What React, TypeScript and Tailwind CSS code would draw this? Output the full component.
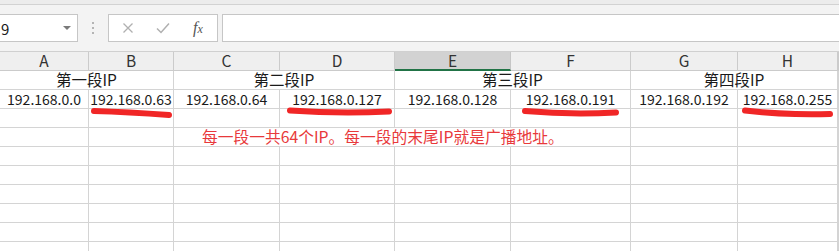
import React from "react";

const cols = ["A", "B", "C", "D", "E", "F", "G", "H", ""];

const ips = [
  "192.168.0.0",
  "192.168.0.63",
  "192.168.0.64",
  "192.168.0.127",
  "192.168.0.128",
  "192.168.0.191",
  "192.168.0.192",
  "192.168.0.255",
  "",
];

const groups = ["第一段IP", "第二段IP", "第三段IP", "第四段IP"];

const cell = "h-[19px] border-r border-b border-[#d4d4d4] flex items-center justify-center whitespace-nowrap";

function EmptyRow() {
  return (
    <>
      {cols.map((_, i) => (
        <div key={i} className={cell} />
      ))}
    </>
  );
}

export default function App() {
  return (
    <div className="relative w-[839px] h-[251px] overflow-hidden bg-white text-[#1a1a1a] font-['Noto_Sans_CJK_SC',sans-serif]">
      {/* top strip */}
      <div className="h-[5px] bg-[#ececec] border-b border-[#d2d2d2]" />

      {/* formula bar */}
      <div className="h-[46px] bg-[#f3f3f3] flex items-start pt-[9px]">
        <div className="-ml-px w-[79px] h-[28px] bg-white border border-[#c6c6c6] flex items-center justify-between pl-[1px] pr-[6px]">
          <span className="text-[15px] leading-none">9</span>
          <span className="w-0 h-0 border-l-[4px] border-r-[4px] border-t-[4px] border-l-transparent border-r-transparent border-t-[#7a7a7a]" />
        </div>
        <div className="w-[30px] h-[28px] flex flex-col items-center justify-center gap-[3px]">
          <span className="w-[2px] h-[2px] bg-[#b4b4b4]" />
          <span className="w-[2px] h-[2px] bg-[#b4b4b4]" />
          <span className="w-[2px] h-[2px] bg-[#b4b4b4]" />
        </div>
        <div className="w-[110px] h-[28px] bg-white border border-[#c6c6c6] flex items-center">
          <svg width="12" height="12" viewBox="0 0 12 12" className="ml-[13px]">
            <path d="M1.5 1.5 L10.5 10.5 M10.5 1.5 L1.5 10.5" stroke="#b0b0b0" strokeWidth="1.3" fill="none" />
          </svg>
          <svg width="14" height="12" viewBox="0 0 14 12" className="ml-[22px]">
            <path d="M1 6.5 L5 10.5 L13 1.5" stroke="#b0b0b0" strokeWidth="1.5" fill="none" />
          </svg>
          <span className="ml-[23px] font-['Liberation_Serif',serif] italic text-[16px] text-[#555] leading-none">
            f<span className="text-[12px]">x</span>
          </span>
        </div>
        <div className="ml-[4px] flex-1 h-[28px] bg-white border border-[#c6c6c6] mr-[-2px]" />
      </div>

      {/* sheet */}
      <div className="grid grid-cols-[89px_85px_106px_115px_116px_120px_107px_100px_1fr] border-t border-[#d0d0d0] text-[15.5px] leading-none">
        {cols.map((c, i) => (
          <div
            key={c + i}
            className={
              i === 4
                ? "h-[19px] border-r border-b-2 border-r-[#c6c6c6] border-b-[#217346] bg-[#d2d2d2] flex items-center justify-center text-[#333]"
                : "h-[19px] border-r border-b border-[#cbcbcb] bg-[#efefef] flex items-center justify-center text-[#333]"
            }
          >
            {c}
          </div>
        ))}

        {groups.map((g) => (
          <div key={g} className={cell + " col-span-2"}>
            {g}
          </div>
        ))}
        <div className={cell} />

        {ips.map((ip, i) => (
          <div key={i} className={cell + " text-[14px]"}>
            {ip}
          </div>
        ))}

        <EmptyRow />

        <div className={cell} />
        <div className={cell} />
        <div className={cell + " col-span-4 justify-start pl-[28px] text-[15.75px] text-[#e8393b]"}>
          每一段一共64个IP。每一段的末尾IP就是广播地址。
        </div>
        <div className={cell} />
        <div className={cell} />
        <div className={cell} />

        <EmptyRow />
        <EmptyRow />
        <EmptyRow />
        <EmptyRow />
        <EmptyRow />
        <EmptyRow />
      </div>

      {/* red marker underlines */}
      <svg
        width="839"
        height="251"
        className="absolute top-0 left-0 pointer-events-none"
        fill="none"
        stroke="#f02626"
        strokeWidth="6"
        strokeLinecap="round"
      >
        <path d="M94 111 Q 128 112 169 115" />
        <path d="M290 110.5 Q 340 114 389 111.5" />
        <path d="M525 111 Q 570 115 616 112.5" />
        <path d="M745 110.5 Q 790 115.5 830 114" />
      </svg>
    </div>
  );
}
